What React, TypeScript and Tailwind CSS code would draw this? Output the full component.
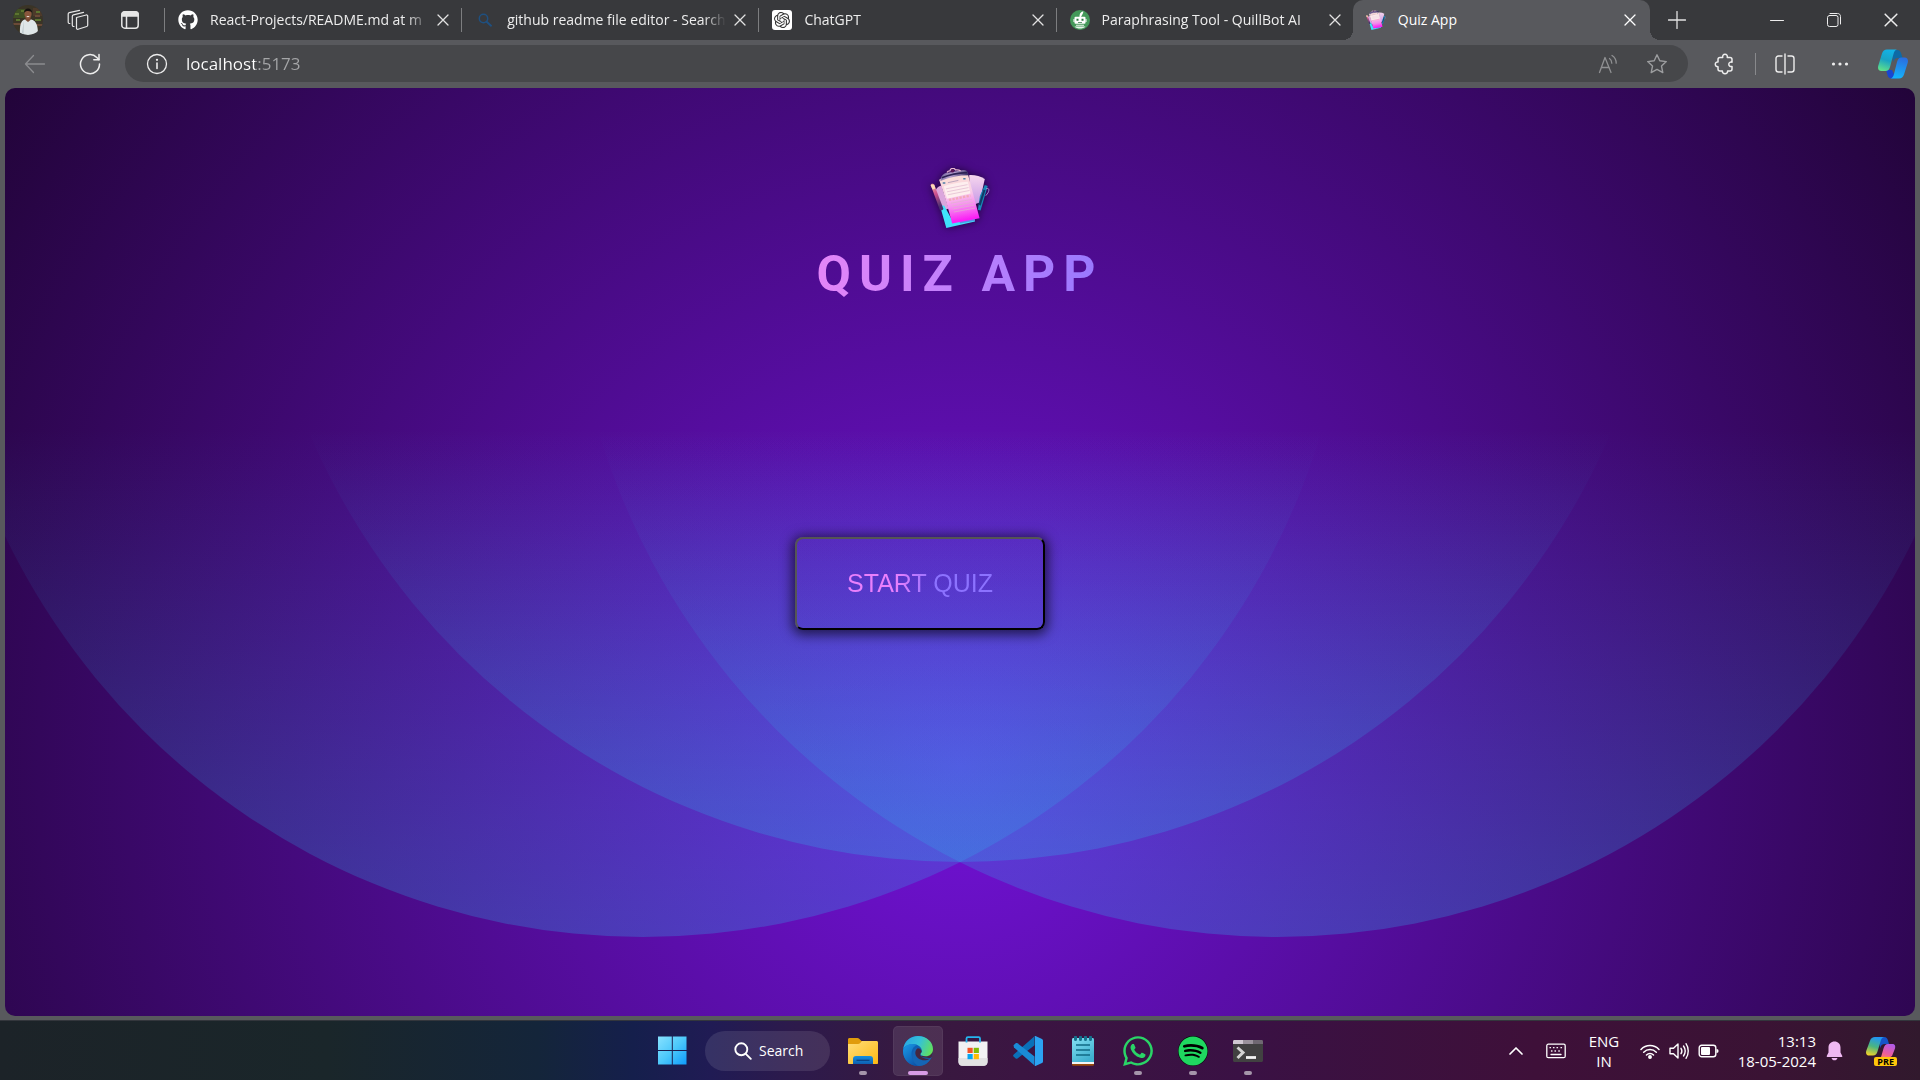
import React from "react";
import { FaGithub, FaSpotify, FaWhatsapp } from "react-icons/fa";
import { SiOpenai } from "react-icons/si";

type IconProps = { className?: string };

const line = {
  fill: "none",
  stroke: "currentColor",
  strokeLinecap: "round" as const,
  strokeLinejoin: "round" as const,
};

function Avatar() {
  return (
    <svg viewBox="0 0 30 30" className="size-[30px]" aria-hidden="true">
      <defs>
        <clipPath id="avatar-clip">
          <circle cx="15" cy="15" r="15" />
        </clipPath>
      </defs>
      <g clipPath="url(#avatar-clip)">
        <rect width="30" height="30" fill="#3a3426" />
        <path d="M0 4h12v9H0z" fill="#3f4f24" />
        <path d="M20 3h10v8H20z" fill="#4d3a2a" />
        <path d="M2 8h4v2H2zM8 5h3v2H8zM3 14h4v2H3zM22 14h6v2h-6zM23 6h4v2h-4z" fill="#5c7430" />
        <path d="M0 18h8v2H0zM22 19h8v2h-8zM22 10h5v2h-5z" fill="#6b4a37" />
        <path d="M7 30c-.5-9 .5-14 4.500-15.500h7C23.500 16 25 21 25 30z" fill="#dfe6e8" />
        <path d="M11 15.500 8.500 30h2z" fill="#c2ccd0" />
        <path d="M12.500 12.500h5v2.500l-2.500 2-2.500-2z" fill="#7a4a33" />
        <ellipse cx="15" cy="9" rx="3.600" ry="4.800" fill="#8a573d" />
        <path d="M11 8c0-6 8-6 8.200 0-1.200-2.400-6.500-2.800-8.200 0z" fill="#15110f" />
        <path d="M13.200 11h3.600l-1.800 1.300z" fill="#f5efe9" />
      </g>
    </svg>
  );
}

function WorkspacesIcon() {
  return (
    <svg viewBox="0 0 22 22" className="size-[22px]" {...line} strokeWidth="1.200" aria-hidden="true">
      <path d="M9.500 8.500 19.200 6c.8-.2 1.500.3 1.500 1.100v9.200c0 .6-.3 1-.9 1.200L11 20.300c-.8.200-1.500-.3-1.500-1.100z" />
      <path d="M7 17.500c-.9.100-1.700-.4-1.700-1.400V7.200c0-.7.400-1.200 1.100-1.400L16.500 3.400" />
      <path d="M2.800 14.500C1.900 14.600 1.200 14 1.200 13V5c0-.7.400-1.200 1.100-1.400L12.500 1.300" />
    </svg>
  );
}

function TabActionsIcon() {
  return (
    <svg viewBox="0 0 20 20" className="size-5" {...line} strokeWidth="1.500" aria-hidden="true">
      <rect x="1.800" y="1.800" width="16.400" height="16.400" rx="3" />
      <path d="M2 6V4.500C2 3 3 2 4.500 2h11C17 2 18 3 18 4.500V6z" fill="currentColor" />
      <path d="M6.500 6v12" />
    </svg>
  );
}

function CloseIcon({ className }: IconProps) {
  return (
    <svg viewBox="0 0 12 12" className={className} {...line} strokeWidth="1.300" aria-hidden="true">
      <path d="m1 1 10 10M11 1 1 11" />
    </svg>
  );
}

function SearchTabIcon() {
  return (
    <svg viewBox="0 0 14 14" className="size-[14px]" {...line} strokeWidth="1.500" aria-hidden="true">
      <circle cx="5.500" cy="5.500" r="4.200" />
      <path d="m8.700 8.700 4.300 4" strokeWidth="1.900" />
    </svg>
  );
}

function QuillBotIcon() {
  return (
    <svg viewBox="0 0 20 20" className="size-5" aria-hidden="true">
      <circle cx="10" cy="10" r="10" fill="#44995a" />
      <path d="M9.500 7C9.300 4 10.500 2 13.300 1.200 13.500 3.500 12 4.500 11 7z" fill="#fff" />
      <rect x="4.500" y="6.800" width="11" height="7" rx="1" fill="#fff" />
      <path d="M3.500 9h1v3h-1zM15.500 9h1v3h-1z" fill="#fff" />
      <path d="M6.500 8.800h2v2h-2zM11.500 8.800h2v2h-2zM8 12h4v.8H8z" fill="#2c7a43" />
      <path d="M6 14.800h8v1H6zM4.500 16.500h11c-2.600 2.700-8.400 2.700-11 0z" fill="#e7f4ea" />
    </svg>
  );
}

function QuizLogo({ className }: IconProps) {
  const id = React.useId();
  return (
    <svg viewBox="450 82 180 184" className={className} aria-hidden="true">
      <defs>
        <linearGradient id={`${id}paper`} x1="0" y1="0" x2="0.150" y2="1">
          <stop offset="0" stopColor="#fbe3cf" />
          <stop offset="0.450" stopColor="#f9cfe8" />
          <stop offset="0.720" stopColor="#f68af0" />
          <stop offset="1" stopColor="#fb1df5" />
        </linearGradient>
        <linearGradient id={`${id}back`} x1="0" y1="0" x2="0" y2="1">
          <stop offset="0" stopColor="#f6d6ee" />
          <stop offset="1" stopColor="#c596e6" />
        </linearGradient>
        <linearGradient id={`${id}clip`} x1="0" y1="0" x2="1" y2="0.300">
          <stop offset="0" stopColor="#5a4c8c" />
          <stop offset="0.500" stopColor="#b9a3cf" />
          <stop offset="1" stopColor="#3a306a" />
        </linearGradient>
        <linearGradient id={`${id}pen`} x1="0" y1="0" x2="0.300" y2="1">
          <stop offset="0" stopColor="#f3b7a2" />
          <stop offset="0.450" stopColor="#d0508f" />
          <stop offset="1" stopColor="#47306f" />
        </linearGradient>
      </defs>
      <path d="M568 104c18-1 34 3 48 12l-16 72-26 10z" fill={`url(#${id}back)`} />
      <path d="M465 150c6-10 12-13 18-14l22 70-18 8z" fill="#dba6dd" />
      <path d="m478 196 20 70 88-20-4-16-66 12-24-44z" fill="#3fe3fb" />
      <path d="m540 252 46-8-2-8-46 8z" fill="#5a8fe8" />
      <path d="m616 134 9 3-22 75-8-2 6-42z" fill="#1787b8" />
      <path d="m612 148 6 2-15 48-6-4z" fill="#123a66" />
      <path d="M620 146c8-4 11 2 6 12l-7 9" fill="none" stroke="#b9a2df" strokeWidth="2.500" />
      <path d="M476 118c24-12 55-18 88-18l36 136-84 16c-12-44-24-90-40-134z" fill={`url(#${id}paper)`} />
      <path d="M490 138c24-8 48-13 74-14l8 36-72 16z" fill="#fdeeee" />
      <path
        d="m497 146 66-13M500 155l66-13M503 164l66-13M512 190l65-12M515 199l65-12M518 208l65-12M521 217l65-12"
        stroke="#dfb4cc"
        strokeWidth="2"
        fill="none"
      />
      <path d="m506 180 66-13" stroke="#f2a9b8" strokeWidth="7" strokeDasharray="7 4" />
      <path d="M487 128h8M550 115h7" stroke="#4d80a8" strokeWidth="4" />
      <path d="m503 127 32-7" stroke="#b8a4bc" strokeWidth="3" />
      <path d="M480 122c0-12 4-18 14-24l56-10c10 0 14 4 16 16-30 0-58 6-86 18z" fill={`url(#${id}clip)`} />
      <path d="M484 112c24-10 50-15 78-16" stroke="#2c2354" strokeWidth="5" fill="none" />
      <path d="M500 96c2-4 4-5 9-5 2-10 14-10 17-3 8-1 12 0 16 3" stroke="#e9b9d2" strokeWidth="4" fill="none" />
      <circle cx="517" cy="91" r="5" fill="#5a1858" />
      <path d="M450 134c2-4 8-5 11-1l28 74c-2 5-7 6-11 3z" fill={`url(#${id}pen)`} />
      <path d="m450 134 11-1 4 12-9 3z" fill="#fbd9b8" />
    </svg>
  );
}

function ExtensionsIcon() {
  return (
    <svg viewBox="0 0 22 22" className="size-[22px]" {...line} strokeWidth="1.500" aria-hidden="true">
      <path d="M6 4.500h2.700c-.3-2 .6-3.200 2.300-3.200s2.600 1.200 2.300 3.200H16c1.300 0 2 .7 2 2v2.700c-2-.4-3.200.5-3.200 2.100s1.200 2.500 3.200 2.100V16c0 1.300-.7 2-2 2h-2.400c.1 1.700-.9 2.700-2.600 2.700S8.300 19.700 8.400 18H6c-1.300 0-2-.7-2-2v-2.300c-1.700 0-2.700-.8-2.700-2.400S2.300 8.800 4 9V6.500c0-1.300.7-2 2-2z" />
    </svg>
  );
}

function EdgeCopilotIcon() {
  return (
    <svg viewBox="0 0 30 30" className="size-[30px]" aria-hidden="true">
      <defs>
        <linearGradient id="cop-a" x1="0.600" y1="0" x2="0.300" y2="1">
          <stop offset="0" stopColor="#12b2e8" />
          <stop offset="0.500" stopColor="#19a3c4" />
          <stop offset="1" stopColor="#5fe08a" />
        </linearGradient>
        <linearGradient id="cop-b" x1="0.500" y1="0" x2="0.300" y2="1">
          <stop offset="0" stopColor="#2a6fe0" />
          <stop offset="1" stopColor="#14b6fb" />
        </linearGradient>
      </defs>
      <path d="M13 1h6c2.500 0 3.600 1.700 4.200 3.600L24.500 9H20c-3 0-4 1.500-4.800 4z" fill="#0d6aa6" />
      <path d="M8 21h6l4 8.500h-4.500c-2.500 0-3.500-1.500-4-3.500z" fill="#1747d1" />
      <path d="M9 .500h10c-2 .5-2.800 2-3.500 4.500L12 18c-.8 2.600-2 4-4.500 4H3.500C.5 22-.4 19.500.2 17L4 4.500C4.900 1.800 6.500.500 9 .500z" fill="url(#cop-a)" />
      <path d="M21 29.500H12.500c2-.5 2.800-2 3.500-4.500L19 13c.8-2.600 2-4.500 4.500-4.500h3C29.500 8.500 30.400 11 29.800 13.500L26 25.500c-.9 2.700-2.500 4-5 4z" fill="url(#cop-b)" />
    </svg>
  );
}

function Backdrop() {
  return (
    <svg
      viewBox="0 0 1910 928"
      preserveAspectRatio="xMidYMid slice"
      className="absolute inset-0 size-full"
      aria-hidden="true"
    >
      <defs>
        <linearGradient id="side" gradientUnits="userSpaceOnUse" x1="0" y1="340" x2="0" y2="849">
          <stop offset="0" stopColor="#2ab4ec" stopOpacity="0" />
          <stop offset="1" stopColor="#2ab4ec" stopOpacity="0.270" />
        </linearGradient>
        <linearGradient id="middle" gradientUnits="userSpaceOnUse" x1="0" y1="340" x2="0" y2="774">
          <stop offset="0" stopColor="#2ab4ec" stopOpacity="0" />
          <stop offset="1" stopColor="#2ab4ec" stopOpacity="0.270" />
        </linearGradient>
      </defs>
      <circle cx="638" cy="141" r="708" fill="url(#side)" />
      <circle cx="1272" cy="141" r="708" fill="url(#side)" />
      <circle cx="955" cy="66" r="708" fill="url(#middle)" />
    </svg>
  );
}

const tabs = [
  { title: "React-Projects/README.md at m", icon: <FaGithub className="size-5 text-white" /> },
  {
    title: "github readme file editor - Search",
    icon: (
      <span className="text-[#1f5080]">
        <SearchTabIcon />
      </span>
    ),
  },
  {
    title: "ChatGPT",
    icon: (
      <span className="grid size-5 place-items-center rounded-[3px] bg-white text-[#333]">
        <SiOpenai className="size-4" />
      </span>
    ),
  },
  { title: "Paraphrasing Tool - QuillBot AI", icon: <QuillBotIcon /> },
];

function TabBar() {
  return (
    <header className="flex h-10 shrink-0 items-center bg-[#38393c]">
      <div className="flex w-[164px] shrink-0 items-center pl-[13px]">
        <button aria-label="Profile">
          <Avatar />
        </button>
        <button aria-label="Workspaces" className="ml-[24px] text-[#e6e6e6]">
          <WorkspacesIcon />
        </button>
        <button aria-label="Tab actions" className="ml-[31px] text-[#e6e6e6]">
          <TabActionsIcon />
        </button>
      </div>
      <nav aria-label="Tabs" className="flex h-full max-w-[1486px] flex-1 items-center">
        {tabs.map((tab) => (
          <div key={tab.title} className="flex h-full min-w-0 flex-1 items-center">
            <span className="h-6 w-px shrink-0 bg-[#7d7e80]" />
            <button className="flex min-w-0 flex-1 items-center pl-[13px] text-left">
              <span className="grid size-5 shrink-0 place-items-center">{tab.icon}</span>
              <span className="ml-3 min-w-0 flex-1 overflow-hidden whitespace-nowrap text-[14px] leading-5 text-[#ededed] [mask-image:linear-gradient(to_right,black_90%,transparent)]">
                {tab.title}
              </span>
            </button>
            <button aria-label={`Close ${tab.title}`} className="mr-3 ml-2 shrink-0 text-[#e2e2e2]">
              <CloseIcon className="size-3" />
            </button>
          </div>
        ))}
        <div className="relative flex h-full min-w-0 flex-1 items-center rounded-t-[10px] bg-[#58595d]">
          <span className="absolute bottom-0 -left-[10px] size-[10px] bg-[radial-gradient(circle_at_0_0,transparent_10px,#58595d_10px)]" />
          <span className="absolute -right-[10px] bottom-0 size-[10px] bg-[radial-gradient(circle_at_100%_0,transparent_10px,#58595d_10px)]" />
          <button className="flex min-w-0 flex-1 items-center pl-[13px] text-left" aria-current="page">
            <QuizLogo className="size-5 shrink-0" />
            <span className="ml-3 flex-1 text-[14px] leading-5 text-white">Quiz App</span>
          </button>
          <button aria-label="Close Quiz App" className="mr-[14px] shrink-0 text-white">
            <CloseIcon className="size-3" />
          </button>
        </div>
      </nav>
      <button aria-label="New tab" className="ml-[18px] text-[#e2e2e2]">
        <svg viewBox="0 0 18 18" className="size-[18px]" {...line} strokeWidth="1.300" aria-hidden="true">
          <path d="M9 .500v17M.500 9h17" />
        </svg>
      </button>
      <div className="mr-px ml-auto flex shrink-0 text-[#ededed]">
        <button aria-label="Minimize" className="grid w-[57px] place-items-center">
          <svg viewBox="0 0 14 14" className="size-[14px]" {...line} strokeWidth="1" aria-hidden="true">
            <path d="M.500 7.500h13" />
          </svg>
        </button>
        <button aria-label="Restore" className="grid w-[57px] place-items-center">
          <svg viewBox="0 0 14 14" className="size-[14px]" {...line} strokeWidth="1" aria-hidden="true">
            <rect x=".5" y="2.500" width="10.500" height="11" rx="2" />
            <path d="M3 .500h7.500c1.800 0 3 1.200 3 3V11" />
          </svg>
        </button>
        <button aria-label="Close window" className="grid w-[57px] place-items-center">
          <CloseIcon className="size-[14px]" />
        </button>
      </div>
    </header>
  );
}

function Toolbar() {
  return (
    <div className="flex h-12 shrink-0 items-center bg-[#58595d] pb-px text-[#ededed]">
      <button aria-label="Back" className="ml-6 text-[#8b8c8f]">
        <svg viewBox="0 0 22 22" className="size-[22px]" {...line} strokeWidth="1.300" aria-hidden="true">
          <path d="M9.500 2.500 1.500 11l8 8.500M1.500 11h19" />
        </svg>
      </button>
      <button aria-label="Refresh" className="ml-[33px]">
        <svg viewBox="0 0 22 22" className="size-[22px]" {...line} strokeWidth="1.500" aria-hidden="true">
          <path d="M20.500 11A9.500 9.500 0 1 1 17.800 4.500L20 6.800" />
          <path d="M20 1.500v5.300h-5.200" />
        </svg>
      </button>
      <div className="ml-6 flex h-[37px] flex-1 items-center rounded-full bg-[#46474a] pr-5 pl-[21px]">
        <svg viewBox="0 0 22 22" className="size-[22px] shrink-0" {...line} strokeWidth="1.300" aria-hidden="true">
          <circle cx="11" cy="11" r="9.500" />
          <path d="M11 10v5.500" strokeWidth="1.600" />
          <circle cx="11" cy="6.800" r=".5" fill="currentColor" />
        </svg>
        <input
          aria-label="Address"
          defaultValue="localhost:5173"
          className="ml-[18px] min-w-0 flex-1 bg-[linear-gradient(to_right,#ffffff_69px,#a5a6a8_69px)] bg-clip-text text-[17px] leading-6 text-transparent outline-none"
        />
        <button aria-label="Read aloud" className="text-[#909193]">
          <svg viewBox="0 0 20 20" className="size-5" {...line} strokeWidth="1.300" aria-hidden="true">
            <path d="M1.500 18.500 7 3.500l6 15M3.300 13.500h7.900" />
            <path d="M11.500 4.500c1.500 1 2.300 2.700 2.300 4.700M14 1.500c2.700 1.700 4.200 4.500 4.200 7.700" />
          </svg>
        </button>
        <button aria-label="Add to favorites" className="ml-[28px] text-[#9c9d9f]">
          <svg viewBox="0 0 22 22" className="size-[22px]" {...line} strokeWidth="1.400" aria-hidden="true">
            <path d="m11 1.800 2.800 6 6.500.8-4.800 4.500 1.300 6.500L11 16.400l-5.800 3.200 1.300-6.500L1.700 8.600l6.500-.8z" />
          </svg>
        </button>
      </div>
      <button aria-label="Extensions" className="ml-[26px]">
        <ExtensionsIcon />
      </button>
      <span className="ml-[19px] h-[22px] w-px bg-[#88898c]" />
      <button aria-label="Split screen" className="ml-[19px]">
        <svg viewBox="0 0 20 22" className="h-[22px] w-5" {...line} strokeWidth="1.400" aria-hidden="true">
          <path d="M10 1v20M7 3H3.500C2 3 1 4 1 5.500v11C1 18 2 19 3.500 19H7M13 3h3.500C18 3 19 4 19 5.500v11c0 1.500-1 2.500-2.500 2.500H13" />
        </svg>
      </button>
      <button aria-label="Settings and more" className="ml-9">
        <svg viewBox="0 0 18 4" className="h-1 w-[18px]" fill="currentColor" aria-hidden="true">
          <circle cx="2.500" cy="2" r="1.600" />
          <circle cx="9" cy="2" r="1.600" />
          <circle cx="15.500" cy="2" r="1.600" />
        </svg>
      </button>
      <button aria-label="Copilot" className="mr-3 ml-[29px]">
        <EdgeCopilotIcon />
      </button>
    </div>
  );
}

function QuizPage() {
  return (
    <main className="relative flex min-h-0 flex-1 flex-col items-center overflow-hidden rounded-[10px] bg-[radial-gradient(circle_at_50%_73%,#7212d8,#220439)]">
      <Backdrop />
      <QuizLogo className="relative mt-20 size-[60px] drop-shadow-[0_0_4px_rgba(0,0,0,0.6)]" />
      <h1 className="relative mt-4 bg-linear-to-r from-[#e485f8] to-[#9778ff] bg-clip-text font-[Roboto] text-[50px] leading-[60px] font-bold tracking-[8px] text-transparent uppercase">
        Quiz App
      </h1>
      <button className="relative mt-[233px] mr-20 h-[93px] w-[250px] rounded-[8px] border-2 border-t-[#555555] border-r-black border-b-black border-l-[#555555] pb-0.5 shadow-[0_2px_12px_3px_rgba(0,0,0,0.6)]">
        <span className="block bg-[linear-gradient(to_right,#ea80fc_40%,#8c72ff_56%)] bg-clip-text font-['Liberation_Sans'] text-[25px] leading-8 text-transparent">
          START QUIZ
        </span>
      </button>
    </main>
  );
}

function WindowsIcon() {
  return (
    <svg viewBox="0 0 30 30" className="size-[30px]" aria-hidden="true">
      <defs>
        <linearGradient id="win" gradientUnits="userSpaceOnUse" x1="0" y1="0" x2="30" y2="30">
          <stop offset="0" stopColor="#8be3ff" />
          <stop offset="0.500" stopColor="#4cc8fb" />
          <stop offset="1" stopColor="#0a98fb" />
        </linearGradient>
      </defs>
      <path d="M1 .500h13.800V14H1zM15.800 .500h13.700V14H15.800zM1 15h13.800v13.500H1zM15.800 15h13.700v13.500H15.800z" fill="url(#win)" />
    </svg>
  );
}

function FolderIcon() {
  return (
    <svg viewBox="0 0 30 30" className="size-[30px]" aria-hidden="true">
      <defs>
        <linearGradient id="folder" x1="0" y1="0" x2="1" y2="1">
          <stop offset="0" stopColor="#ffde7a" />
          <stop offset="1" stopColor="#fdb913" />
        </linearGradient>
        <linearGradient id="folder-tray" x1="0" y1="0" x2="0" y2="1">
          <stop offset="0" stopColor="#1490df" />
          <stop offset="1" stopColor="#0f5fb0" />
        </linearGradient>
      </defs>
      <path d="M0 3.500C0 2.600.600 2 1.500 2h8c.6 0 1 .2 1.400.6L13.500 5H28v4H0z" fill="#e09c0c" />
      <path d="M0 8h10c.8 0 1.400-.3 2-.8L14 5h14.500c.9 0 1.500.6 1.500 1.500V27c0 .6-.4 1-1 1H1c-.6 0-1-.4-1-1z" fill="url(#folder)" />
      <path d="M5 28v-5c0-1.800 1-3 3-3h14c2 0 3 1.200 3 3v5z" fill="url(#folder-tray)" />
      <path d="M8.500 24.300h13" stroke="#0b3f7f" strokeWidth="1.200" />
    </svg>
  );
}

function EdgeIcon() {
  return (
    <svg viewBox="0 0 30 30" className="size-[30px]" aria-hidden="true">
      <defs>
        <linearGradient id="edge-top" x1="0" y1="0.300" x2="1" y2="0.600">
          <stop offset="0" stopColor="#2aa6e2" />
          <stop offset="0.500" stopColor="#35c1d8" />
          <stop offset="1" stopColor="#62e05c" />
        </linearGradient>
        <linearGradient id="edge-body" x1="0" y1="0" x2="0.700" y2="1">
          <stop offset="0" stopColor="#1a9be8" />
          <stop offset="1" stopColor="#0c52a8" />
        </linearGradient>
      </defs>
      <circle cx="15" cy="15" r="15" fill="#0e60b5" />
      <path d="M30 13.500C30 26 26 21 17 21z" fill="#45273f" />
      <path d="M.200 13C1.500 5 7.500 0 15 0c8.500 0 15 6 15 13.200 0 4.300-3.300 7-7.300 7-3.300 0-5.300-1-5.300-2.200 0-.8 1.400-1.200 1.400-3.300 0-3.500-3.600-6.500-8.300-6.500C5.500 8.200 1.500 10 .200 13z" fill="url(#edge-top)" />
      <path d="M0 15C0 10.700 4.500 8 9.500 8c1.700 0 3.400.4 4.700 1-4 1.300-5.700 5-5.700 9 0 6 4.500 10.500 9 11.700C8 31.500 0 24.500 0 15z" fill="url(#edge-body)" />
      <path d="M27.700 22.500c-2 4.500-6.700 7.500-11.500 7.500C11 29 8.500 22.500 9.500 17.500c.6-3 2.500-5.700 4.700-5.500 2.400.2 4.300 1.600 4.400 3.300 0 1.600-1.400 1.900-1.400 2.900 0 3 5.500 5.300 10.500 4.300z" fill="#1565b4" />
      <path d="M14.800 12.200c-2 1.200-2.800 3.500-2.400 5.800.6 3.800 5 6.500 9.400 6.300 3.200-.1 5.900-1.800 5.900-1.800-5 1-10.500-1.300-10.500-4.300 0-1 1.400-1.300 1.400-2.900-.1-1.600-1.700-3-3.800-3.100z" fill="#45273f" />
    </svg>
  );
}

function StoreIcon() {
  return (
    <svg viewBox="0 0 30 30" className="size-[30px]" aria-hidden="true">
      <path d="M.500 5.500h29V26c0 2.300-1.600 3.800-3.800 3.800H4.300C2.100 29.800.500 28.300.500 26z" fill="#f2f2f3" />
      <path d="M.500 22h29v4c0 2.300-1.600 3.800-3.800 3.800H4.300C2.100 29.800.500 28.300.500 26z" fill="#e2e2e3" />
      <path d="M9.500 11.800h5.200V17H9.500z" fill="#f35325" />
      <path d="M15.700 11.800h5.200V17h-5.200z" fill="#81bc06" />
      <path d="M9.500 18h5.200v5.200H9.500z" fill="#05a6f0" />
      <path d="M15.700 18h5.200v5.200h-5.200z" fill="#ffba08" />
      <path d="M8.500 6.500v-4c0-.9.500-1.400 1.400-1.400h10.700c.9 0 1.400.5 1.400 1.400v4" fill="none" stroke="#25b5ee" strokeWidth="1.800" />
    </svg>
  );
}

function CodeIcon() {
  return (
    <svg viewBox="0 0 30 30" className="size-[30px]" aria-hidden="true">
      <path d="M1 18.200 21.500.300v9L4.500 22.500c-.6.400-1.300.4-1.800 0L.500 20.500c-.6-.6-.5-1.700.5-2.300z" fill="#0a70b8" />
      <path d="M1 11.500.500 9.300l2.200-2c.5-.4 1.200-.4 1.800 0l17 13.200v9z" fill="#1a8bd6" />
      <path d="M21.500.300c.5-.4 1-.3 1.500 0l6 2.700c.6.300 1 .9 1 1.600v20.800c0 .7-.4 1.300-1 1.600l-6 2.700c-.5.300-1 .4-1.500 0 .4.200.5-.3.500-1V1.300c0-.7-.1-1.100-.5-1z" fill="#2ca3f2" />
    </svg>
  );
}

function NotepadIcon() {
  return (
    <svg viewBox="0 0 22 30" className="h-[30px] w-[22px]" aria-hidden="true">
      <defs>
        <linearGradient id="note" x1="0" y1="0" x2="0.600" y2="1">
          <stop offset="0" stopColor="#84dff2" />
          <stop offset="1" stopColor="#3fb0d0" />
        </linearGradient>
      </defs>
      <path d="M0 26h22v2.500c0 .8-.6 1.300-1.300 1.300H1.300C.600 29.800 0 29.300 0 28.500z" fill="#9a4a0c" />
      <path d="M0 25h22v3H0z" fill="#f4f4f4" />
      <path d="M0 3.500C0 2.700.600 2 1.300 2h19.400c.7 0 1.300.7 1.300 1.500V26H0z" fill="url(#note)" />
      <path d="M4 9h14M4 14h14M4 19h14" stroke="#116a85" strokeWidth="1.600" />
      <path d="M3.500 1v2.500M8.500 1v2.500M13.500 1v2.500M18.500 1v2.500" stroke="#146f8b" strokeWidth="3" strokeLinecap="round" />
    </svg>
  );
}

function TerminalIcon() {
  return (
    <svg viewBox="0 0 30 30" className="size-[30px]" aria-hidden="true">
      <path d="M0 5.500C0 4.600.600 4 1.500 4h27c.9 0 1.500.6 1.500 1.500v19c0 .9-.6 1.500-1.500 1.500h-27C.600 26 0 25.400 0 24.500z" fill="#414141" />
      <path d="M0 8V5.500C0 4.600.600 4 1.500 4H10v4z" fill="#d0c8d2" />
      <path d="M10 4h10v4H10z" fill="#9a929c" />
      <path d="M20 4h8.500c.9 0 1.500.6 1.500 1.500V8H20z" fill="#6f6872" />
      <path d="m4.500 11.500 5.500 5-5.500 5.500" stroke="#d3d3d3" strokeWidth="3" fill="none" />
      <path d="M13 21.500h10" stroke="#f2f2f2" strokeWidth="2.800" />
    </svg>
  );
}

const apps = [
  { name: "File Explorer", icon: <FolderIcon />, running: true },
  { name: "Microsoft Edge", icon: <EdgeIcon />, active: true },
  { name: "Microsoft Store", icon: <StoreIcon /> },
  { name: "Visual Studio Code", icon: <CodeIcon /> },
  { name: "Notepad", icon: <NotepadIcon /> },
  { name: "WhatsApp", icon: <FaWhatsapp className="size-[34px] text-[#2ad467]" />, running: true },
  {
    name: "Spotify",
    icon: (
      <span className="grid place-items-center rounded-full bg-black">
        <FaSpotify className="size-[30px] text-[#1fd760]" />
      </span>
    ),
    running: true,
  },
  { name: "Terminal", icon: <TerminalIcon />, running: true },
];

function PreviewCopilotIcon() {
  return (
    <span className="relative block h-[30px] w-[30px]">
      <svg viewBox="0 0 30 30" className="size-[30px]" aria-hidden="true">
        <defs>
          <linearGradient id="pre-a" x1="0.500" y1="0" x2="0.200" y2="1">
            <stop offset="0" stopColor="#2196f3" />
            <stop offset="0.500" stopColor="#4bb580" />
            <stop offset="1" stopColor="#f5d327" />
          </linearGradient>
          <linearGradient id="pre-b" x1="0.700" y1="0" x2="0.300" y2="1">
            <stop offset="0" stopColor="#b15be8" />
            <stop offset="0.600" stopColor="#ec5d9b" />
            <stop offset="1" stopColor="#ff8b4f" />
          </linearGradient>
        </defs>
        <path d="M12 1h6c2.500 0 3.300 1.300 4 3.500l1 3.500h-4c-3 0-4 1.500-4.800 4z" fill="#1554c8" />
        <path d="M9 1h9c-2 .5-2.800 2-3.500 4.500l-3 10c-.8 2.600-2 4-4.500 4H3.500c-3 0-3.900-2-3.300-4.500L4 4.800C4.900 2.200 6.500 1 9 1z" fill="url(#pre-a)" />
        <path d="M20 24H12c2-.5 2.800-2 3.500-4.500l2-7c.8-2.600 2-4.500 4.500-4.500h4c3 0 3.700 2 3 4.500L26 20z" fill="url(#pre-b)" />
      </svg>
      <span className="absolute -right-px bottom-0 rounded-[2px] bg-[#ffc60a] px-[3px] text-[9px] leading-[9px] font-bold text-black">
        PRE
      </span>
    </span>
  );
}

function Taskbar() {
  return (
    <footer className="grid h-[60px] shrink-0 grid-cols-[1fr_auto_1fr] items-center border-t border-[#33363c] bg-[linear-gradient(to_right,#1c2328_0%,#1a262a_17%,#14253a_28%,#151f4c_33%,#201b54_37%,#2c1a4c_41%,#38193f_48%,#3b1542_53%,#3a1144_65%,#3e1039_80%,#3a1334_92%,#31192d_100%)] text-white">
      <span />
      <div className="flex items-center gap-[5px]">
        <button aria-label="Start" className="grid size-[50px] place-items-center">
          <WindowsIcon />
        </button>
        <button className="mx-[3px] flex h-10 w-[125px] items-center rounded-full bg-white/10 pl-[29px]">
          <svg viewBox="0 0 18 18" className="mr-[7px] size-[18px]" {...line} strokeWidth="1.900" aria-hidden="true">
            <circle cx="7.300" cy="7.300" r="6" />
            <path d="m11.800 11.800 5 5" />
          </svg>
          <span className="text-[14px] leading-5">Search</span>
        </button>
        {apps.map((app) => (
          <button
            key={app.name}
            aria-label={app.name}
            className={
              app.active
                ? "relative grid size-[50px] place-items-center rounded-[5px] border border-white/5 bg-white/10"
                : "relative grid size-[50px] place-items-center"
            }
          >
            {app.icon}
            {app.active && <span className="absolute bottom-0 h-1 w-5 rounded-full bg-[#d89ce6]" />}
            {app.running && <span className="absolute bottom-px h-1 w-2 rounded-full bg-[#a595aa]" />}
          </button>
        ))}
      </div>
      <div className="flex items-center justify-end pr-6">
        <button aria-label="Show hidden icons">
          <svg viewBox="0 0 14 14" className="size-[14px]" {...line} strokeWidth="1.700" aria-hidden="true">
            <path d="m1 10 6-6 6 6" />
          </svg>
        </button>
        <button aria-label="Touch keyboard" className="ml-[23px]">
          <svg viewBox="0 0 20 16" className="h-4 w-5" {...line} strokeWidth="1.300" aria-hidden="true">
            <rect x=".8" y="1.200" width="18.400" height="13.500" rx="1.500" />
            <path d="M4 4.700h.5M7.500 4.700H8M11 4.700h.5M15 4.700h.5M5.500 8H6M9 8h.5M12.800 8h.5M5 11.500h10" />
          </svg>
        </button>
        <button className="ml-[22px] w-8 text-center text-[15px] leading-5">
          ENG
          <br />
          IN
        </button>
        <button aria-label="Network, volume and battery" className="ml-5 flex items-center gap-[9px]">
          <svg viewBox="0 0 20 16" className="h-4 w-5" {...line} strokeWidth="1.500" aria-hidden="true">
            <path d="M1 6.500c5-5.200 13-5.200 18 0M3.700 9.300c3.500-3.600 9.100-3.600 12.600 0M6.500 12c2-2 5-2 7 0" />
            <circle cx="10" cy="14" r="1.200" fill="currentColor" />
          </svg>
          <svg viewBox="0 0 20 18" className="h-[18px] w-5" {...line} strokeWidth="1.400" aria-hidden="true">
            <path d="M1 6.300h3.500L9 2v14l-4.500-4.300H1z" />
            <path d="M12 6.300c1 1.500 1 3.900 0 5.400M14.500 4c2 2.900 2 7.100 0 10M17 1.700c3 4.300 3 10.300 0 14.600" />
          </svg>
          <svg viewBox="0 0 22 14" className="h-[14px] w-[22px]" aria-hidden="true">
            <rect x="1.200" y="1.200" width="16.600" height="11.600" rx="2.500" fill="none" stroke="currentColor" strokeWidth="1.400" />
            <rect x="3" y="3" width="9" height="8" rx="1" fill="currentColor" />
            <path d="M18.500 5c1.500 0 2 .7 2 2s-.5 2-2 2z" fill="currentColor" />
          </svg>
        </button>
        <button className="ml-4 w-[80px] text-right text-[15px] leading-5 whitespace-nowrap">
          13:13
          <br />
          18-05-2024
        </button>
        <button aria-label="Notifications" className="ml-[10px] text-[#efb9f2]">
          <svg viewBox="0 0 17 20" className="h-5 w-[17px]" fill="currentColor" aria-hidden="true">
            <path d="M8.500.500C12 .500 14.500 3 14.500 6.500v5l1.800 3.500c.2.500 0 .9-.6.9H1.300c-.6 0-.8-.4-.6-.9l1.800-3.500v-5C2.500 3 5 .500 8.500.500zM5.500 17h6c-.5 1.500-1.500 2.300-3 2.300s-2.500-.8-3-2.300z" />
          </svg>
        </button>
        <button aria-label="Copilot preview" className="ml-[23px]">
          <PreviewCopilotIcon />
        </button>
      </div>
    </footer>
  );
}

export default function App() {
  return (
    <div className="flex h-screen flex-col overflow-hidden bg-[#58595d] font-['Open_Sans',sans-serif]">
      <TabBar />
      <Toolbar />
      <div className="flex min-h-0 flex-1 px-[5px] pb-1">
        <QuizPage />
      </div>
      <Taskbar />
    </div>
  );
}
